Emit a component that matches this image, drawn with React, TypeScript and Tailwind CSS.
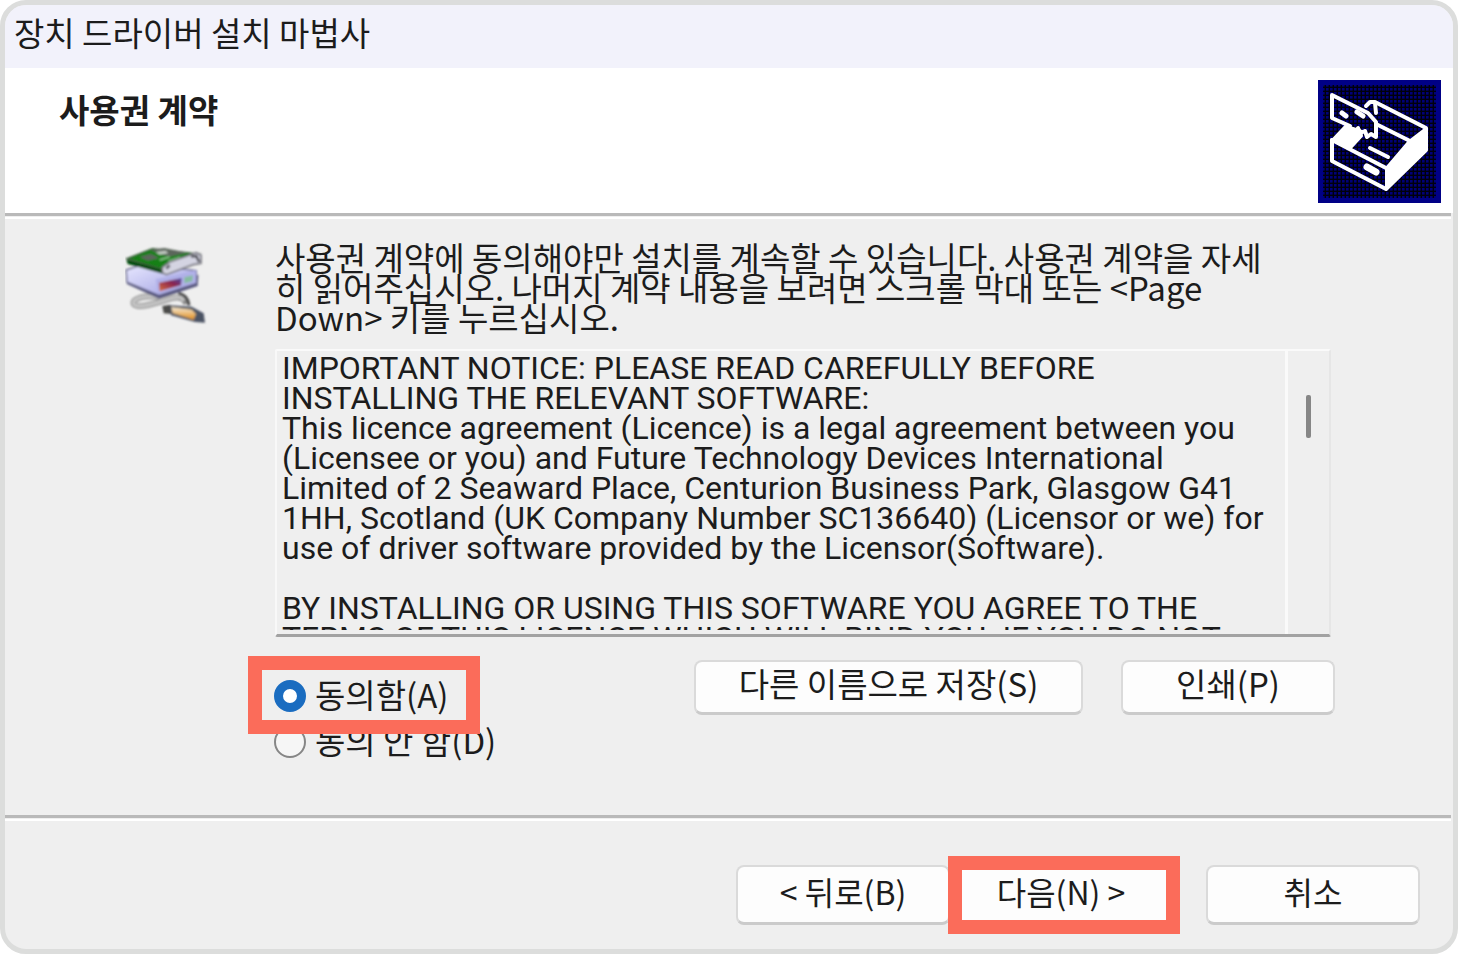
import { useState, type ButtonHTMLAttributes, type ReactNode } from "react";
import clsx from "clsx";

const LICENCE_TEXT = `IMPORTANT NOTICE: PLEASE READ CAREFULLY BEFORE
INSTALLING THE RELEVANT SOFTWARE:
This licence agreement (Licence) is a legal agreement between you
(Licensee or you) and Future Technology Devices International
Limited of 2 Seaward Place, Centurion Business Park, Glasgow G41
1HH, Scotland (UK Company Number SC136640) (Licensor or we) for
use of driver software provided by the Licensor(Software).

BY INSTALLING OR USING THIS SOFTWARE YOU AGREE TO THE
TERMS OF THIS LICENCE WHICH WILL BIND YOU. IF YOU DO NOT`;

function WizardButton({ className, ...props }: ButtonHTMLAttributes<HTMLButtonElement>) {
  return (
    <button
      type="button"
      className={clsx(
        "rounded-lg border-2 border-b-3 border-[#dadada] border-b-[#cbcbcb] bg-[#fdfdfd] pb-2 whitespace-nowrap",
        className
      )}
      {...props}
    />
  );
}

function Highlight({ className }: { className: string }) {
  return <span aria-hidden className={clsx("pointer-events-none absolute z-10 border-14 border-[#fb6c5a]", className)} />;
}

function Divider() {
  return <div className="mr-[2px] h-[6px] shrink-0 border-t-3 border-b-2 border-t-[#b9b9b9] border-b-white bg-[#efefef]" />;
}

function RadioOption(props: { id: string; checked: boolean; onSelect: () => void; children: ReactNode }) {
  return (
    <div className="flex h-[46px] items-center gap-[9px]">
      <input
        id={props.id}
        type="radio"
        name="licence"
        checked={props.checked}
        onChange={props.onSelect}
        className="size-8 appearance-none rounded-full border-2 border-[#868686] bg-[#f6f6f6] checked:border-9 checked:border-[#1a6cc0] checked:bg-white"
      />
      <label htmlFor={props.id} className="pb-1 whitespace-nowrap">
        {props.children}
      </label>
    </div>
  );
}

function SetupBoxIcon() {
  return (
    <svg aria-hidden viewBox="0 0 123 123" className="size-[123px] shrink-0">
      <defs>
        <pattern id="dither" width="4" height="4" patternUnits="userSpaceOnUse">
          <rect width="4" height="4" fill="#00000c" />
          <rect width="2.6" height="2.6" fill="#000078" />
        </pattern>
      </defs>
      <rect width="123" height="123" fill="#000086" />
      <rect x="5" y="5" width="113" height="113" fill="url(#dither)" />
      <g stroke="#fff" strokeLinejoin="round" strokeLinecap="round">
        <path d="M48 26 52 22 57 22 108 48 108 70 68 109 14 81 14 60" fill="none" strokeWidth="4" />
        <path d="M57 23 58 33" fill="none" strokeWidth="4" />
        <path d="M68 88 91 61 108 48 108 70 68 109Z" fill="#fff" strokeWidth="2" />
        <path d="M14 60 68 88M58 44 92 61" fill="none" strokeWidth="4" />
        <path d="M14 60 30 43 43 50 44 56 32 69Z" fill="#fff" strokeWidth="2" />
        <path d="M14 15 14 38 32 46 42 49 50 53 58 57 58 41 52 34Z" fill="url(#dither)" stroke="none" />
        <path d="M32 46 14 38 14 15 50 33 58 42 58 57 53 54 49 57 47 51 42 53 40 48" fill="none" strokeWidth="4" />
        <path d="M24 33 28 36M39 32 45 36" fill="none" strokeWidth="5" />
        <path d="M52 68 70 77" fill="none" strokeWidth="4" />
        <path d="M49 87 58 92" fill="none" strokeWidth="7" />
      </g>
    </svg>
  );
}

function DriverIcon() {
  return (
    <svg aria-hidden viewBox="48 45 246 240" className="mt-[3px] h-[80px] w-[82px] shrink-0">
      <defs>
        <linearGradient id="drive" x1="0" y1="0" x2="1" y2="1">
          <stop offset="0" stopColor="#e8e8ff" />
          <stop offset="1" stopColor="#9c9ce0" />
        </linearGradient>
        <linearGradient id="slot" x1="0" y1="1" x2="1" y2="0">
          <stop offset="0" stopColor="#d8703a" />
          <stop offset="0.6" stopColor="#8a2450" />
          <stop offset="1" stopColor="#4a4aa8" />
        </linearGradient>
        <linearGradient id="plug" x1="0" y1="0" x2="0" y2="1">
          <stop offset="0" stopColor="#f4ecdc" />
          <stop offset="1" stopColor="#e08a14" />
        </linearGradient>
        <filter id="soft" x="-10%" y="-10%" width="120%" height="120%">
          <feGaussianBlur stdDeviation="3" />
        </filter>
      </defs>
      <g filter="url(#soft)">
        <path d="M150 202C110 194 68 204 74 222C86 240 150 216 190 204C216 198 226 208 232 222" fill="none" stroke="#8a8a8a" strokeWidth="17" />
        <path d="M150 202C110 194 68 204 74 222C86 240 150 216 190 204C212 198 218 202 224 212" fill="none" stroke="#c4c4c4" strokeWidth="11" />
        <path d="M208 190C228 194 238 208 240 226" fill="none" stroke="#4c4c4c" strokeWidth="9" />
        <path d="M50 124 54 162 150 206 266 168 268 134 160 176Z" fill="#55557c" />
        <path d="M52 120 100 104 262 122 262 160 150 196 54 156Z" fill="url(#drive)" stroke="#65658c" strokeWidth="4" />
        <path d="M140 148 262 120 260 158 146 190Z" fill="#b0b0e8" />
        <path d="M150 158 218 144 216 166 152 184Z" fill="url(#slot)" />
        <path d="M226 142 252 136 250 154 226 160Z" fill="#86bca0" />
        <path d="M52 88 160 118 164 132 56 102Z" fill="#064c08" />
        <path d="M54 86 130 56 270 72 160 118Z" fill="#158018" stroke="#3c5c3c" strokeWidth="4" />
        <path d="M122 60 166 54 236 68 180 80ZM92 80 126 72 150 84 116 92Z" fill="#5c665c" />
        <path d="M140 66 170 62 178 70 152 74Z" fill="#c2cac2" />
        <path d="M152 90 182 80M178 94 214 82" stroke="#8cc88c" strokeWidth="5" />
        <path d="M160 112 182 96 262 68 276 76 276 100 252 104 172 134 160 128Z" fill="#d4d4e2" stroke="#77777f" strokeWidth="5" />
        <path d="M172 116 182 106M246 80 262 78 270 96" stroke="#44444c" strokeWidth="7" fill="none" />
        <path d="M160 228 184 224 188 252 164 250Z" fill="#4c4c48" />
        <path d="M182 226 248 230 284 250 288 278 258 276 186 256Z" fill="#4b5264" />
        <path d="M186 230 248 238 262 252 254 270 190 250Z" fill="url(#plug)" stroke="#7c7468" strokeWidth="3" />
      </g>
    </svg>
  );
}

export default function App() {
  const [agreed, setAgreed] = useState(true);

  return (
    <div className="min-h-screen bg-white font-['Noto_Sans_CJK_KR',sans-serif] text-[33px] leading-[30px] text-[#1c1c1c]">
      <main className="flex min-h-screen flex-col overflow-hidden rounded-[26px] border-5 border-[#dcdddc] bg-[#efefef]">
        <h1 className="h-[63px] shrink-0 bg-[#f2f2fb] pt-3 pl-[9px]">장치 드라이버 설치 마법사</h1>

        <header className="flex h-[145px] shrink-0 items-start justify-between bg-white pt-3 pr-3 pl-[54px]">
          <h2 className="pt-[14px] font-bold">사용권 계약</h2>
          <SetupBoxIcon />
        </header>
        <Divider />

        <section className="flex flex-1 pt-[23px] pr-[122px] pb-10 pl-[120px]">
          <DriverIcon />
          <div className="ml-[68px] min-w-0 flex-1">
            <p className="whitespace-nowrap">
              사용권 계약에 동의해야만 설치를 계속할 수 있습니다. 사용권 계약을 자세
              <br />
              히 읽어주십시오. 나머지 계약 내용을 보려면 스크롤 막대 또는 &lt;Page
              <br />
              Down&gt; 키를 누르십시오.
            </p>

            <div className="mt-[17px] flex h-[288px] rounded-xs border-2 border-b-3 border-[#e6e6e6] border-t-[#fafafa] border-l-[#f8f8f8] border-b-[#a2a2a2]">
              <textarea
                readOnly
                aria-label="사용권 계약"
                value={LICENCE_TEXT}
                className="mb-1 min-w-0 flex-1 resize-none overflow-hidden bg-transparent pt-[2px] pl-[5px] font-[Roboto,sans-serif] text-[32px] leading-[30px] whitespace-pre outline-none"
              />
              <div className="flex w-11 justify-center border-l-3 border-[#fafafa] pt-11">
                <div className="h-[43px] w-[5px] rounded-xs bg-[#868686]" />
              </div>
            </div>

            <div className="-mr-1 mt-[23px] flex items-start">
              <fieldset className="-ml-px pt-[13px]">
                <div className="relative">
                  <RadioOption id="agree" checked={agreed} onSelect={() => setAgreed(true)}>
                    동의함(A)
                  </RadioOption>
                  <Highlight className="-top-[17px] -left-[26px] h-[78px] w-[232px]" />
                </div>
                <RadioOption id="disagree" checked={!agreed} onSelect={() => setAgreed(false)}>
                  동의 안 함(D)
                </RadioOption>
              </fieldset>
              <div className="ml-auto flex gap-[38px]">
                <WizardButton className="h-[55px] w-[389px]">다른 이름으로 저장(S)</WizardButton>
                <WizardButton className="h-[55px] w-[214px]">인쇄(P)</WizardButton>
              </div>
            </div>
          </div>
        </section>

        <Divider />
        <footer className="flex h-[128px] shrink-0 items-start justify-end pt-11 pr-[33px] text-[32px]">
          <WizardButton className="h-[60px] w-[214px]">&lt; 뒤로(B)</WizardButton>
          <div className="relative mr-[34px]">
            <WizardButton className="h-[60px] w-[222px]">다음(N) &gt;</WizardButton>
            <Highlight className="-top-[9px] -left-[2px] h-[78px] w-[232px]" />
          </div>
          <WizardButton className="h-[60px] w-[214px]">취소</WizardButton>
        </footer>
      </main>
    </div>
  );
}
